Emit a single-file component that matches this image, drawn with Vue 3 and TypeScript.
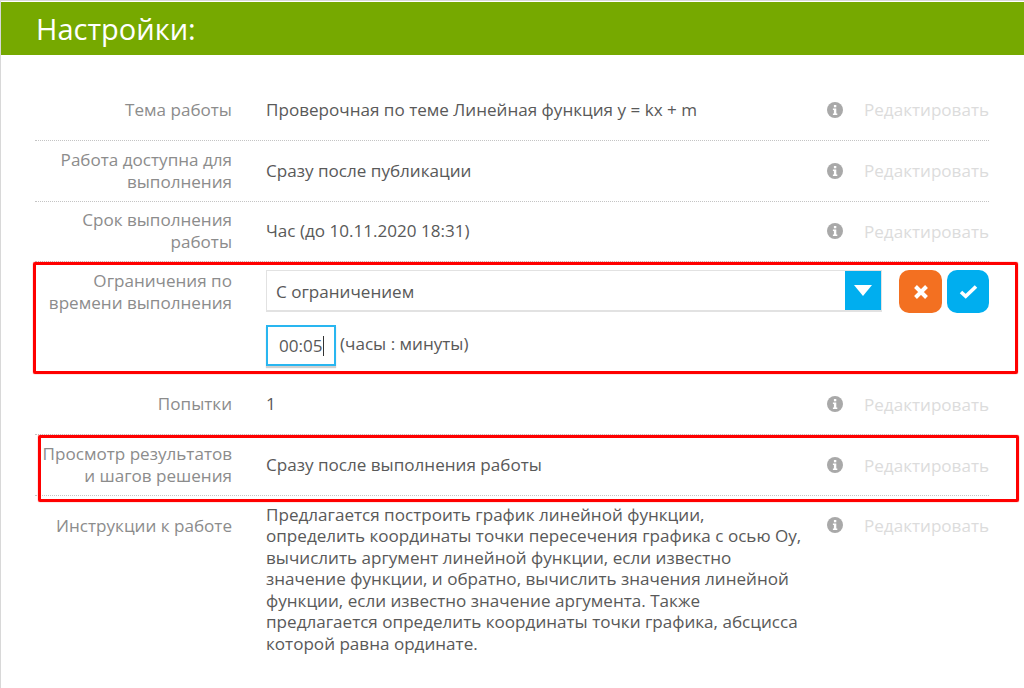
<script setup lang="ts">
interface Row { label: string[]; value: string }
const before: Row[] = [
  { label: ['Тема работы'], value: 'Проверочная по теме Линейная функция y = kx + m' },
  { label: ['Работа доступна для', 'выполнения'], value: 'Сразу после публикации' },
  { label: ['Срок выполнения', 'работы'], value: 'Час (до 10.11.2020 18:31)' },
]
const after: Row[] = [
  { label: ['Попытки'], value: '1' },
  { label: ['Просмотр результатов', 'и шагов решения'], value: 'Сразу после выполнения работы' },
]
const instruction = [
  'Предлагается построить график линейной функции,',
  'определить координаты точки пересечения графика с осью Оу,',
  'вычислить аргумент линейной функции, если известно',
  'значение функции, и обратно, вычислить значения линейной',
  'функции, если известно значение аргумента. Также',
  'предлагается определить координаты точки графика, абсцисса',
  'которой равна ординате.',
]
</script>

<template>
  <div class="page">
    <header class="head">Настройки:</header>
    <section class="list">
      <div v-for="r in before" :key="r.value" class="row">
        <div class="label"><div v-for="l in r.label" :key="l">{{ l }}</div></div>
        <div class="value">{{ r.value }}</div>
        <div class="actions">
          <svg class="info" viewBox="0 0 16 16"><circle cx="8" cy="8" r="8" fill="#a9a9a9" /><rect x="6.9" y="3" width="2.4" height="2.3" fill="#fff" /><path d="M5.9 6.6h3.4v5h1v1.3H5.9v-1.3h1v-3.7h-1z" fill="#fff" /></svg>
          <span class="edit">Редактировать</span>
        </div>
      </div>

      <div class="row editing">
        <div class="label"><div>Ограничения по</div><div>времени выполнения</div></div>
        <div class="editor">
          <div class="top">
            <div class="select">
              <span class="sel-text">С ограничением</span>
              <span class="arrow"><svg width="18" height="11" viewBox="0 0 18 11"><path d="M0 0h18L9 11z" fill="#fff" /></svg></span>
            </div>
            <div class="btns">
              <button class="btn orange"><svg width="16" height="16" viewBox="0 0 16 16"><path d="M2.5 2.5l11 11M13.5 2.5l-11 11" stroke="#fff" stroke-width="4" /></svg></button>
              <button class="btn blue"><svg width="19" height="15" viewBox="0 0 19 15"><path d="M2 8l4.7 4.3L17 2.5" stroke="#fff" stroke-width="3.6" fill="none" /></svg></button>
            </div>
          </div>
          <div class="time">
            <div class="input">00:05<span class="caret"></span></div>
            <span class="hint">(часы : минуты)</span>
          </div>
        </div>
      </div>

      <div v-for="r in after" :key="r.value" class="row">
        <div class="label"><div v-for="l in r.label" :key="l">{{ l }}</div></div>
        <div class="value">{{ r.value }}</div>
        <div class="actions">
          <svg class="info" viewBox="0 0 16 16"><circle cx="8" cy="8" r="8" fill="#a9a9a9" /><rect x="6.9" y="3" width="2.4" height="2.3" fill="#fff" /><path d="M5.9 6.6h3.4v5h1v1.3H5.9v-1.3h1v-3.7h-1z" fill="#fff" /></svg>
          <span class="edit">Редактировать</span>
        </div>
      </div>

      <div class="row last">
        <div class="label">Инструкции к работе</div>
        <div class="value text"><div v-for="l in instruction" :key="l">{{ l }}</div></div>
        <div class="actions">
          <svg class="info" viewBox="0 0 16 16"><circle cx="8" cy="8" r="8" fill="#a9a9a9" /><rect x="6.9" y="3" width="2.4" height="2.3" fill="#fff" /><path d="M5.9 6.6h3.4v5h1v1.3H5.9v-1.3h1v-3.7h-1z" fill="#fff" /></svg>
          <span class="edit">Редактировать</span>
        </div>
      </div>
    </section>
    <div class="mark mark-a"></div>
    <div class="mark mark-b"></div>
  </div>
</template>

<style scoped>
.page {
  position: relative;
  width: 1024px;
  height: 688px;
  overflow: hidden;
  box-sizing: border-box;
  background: #fff;
  border-left: 1px solid #d8d8d8;
  border-top: 1px solid #d8d8d8;
  font-family: "Open Sans", sans-serif;
  font-size: 17.08px;
  color: #595959;
}
.head {
  height: 53px;
  margin-top: 1px;
  padding-left: 35px;
  background: #76a900;
  color: #fff;
  font-size: 29px;
  line-height: 53px;
}
.list {
  padding: 25px 34px 0;
}
.row {
  display: flex;
  align-items: center;
  width: 954px;
  height: 60.8px;
  box-sizing: border-box;
  border-bottom: 1px dotted #c4c4c4;
}
.row.editing {
  height: 112px;
  align-items: flex-start;
  padding-top: 8px;
  border-bottom: none;
}
.row.last {
  height: auto;
  align-items: flex-start;
  border-bottom: none;
  padding-top: 8px;
}
.label {
  width: 197px;
  flex: none;
  margin-right: 34px;
  text-align: right;
  color: #8c8c8c;
  line-height: 22px;
}
.last .label {
  margin-top: 11px;
}
.value {
  flex: 1;
  min-width: 0;
  line-height: 22px;
}
.value.text {
  line-height: 21.45px;
  white-space: nowrap;
}
.actions {
  display: flex;
  align-items: center;
  flex: none;
  width: 162px;
}
.last .actions {
  margin-top: 10px;
}
.info {
  width: 16px;
  height: 16px;
  flex: none;
  margin-right: 21px;
}
.edit {
  color: #dcdcdc;
  white-space: nowrap;
}
.editor {
  flex: 1;
  min-width: 0;
}
.top {
  display: flex;
  align-items: flex-start;
}
.select {
  display: flex;
  width: 617px;
  height: 42px;
  box-sizing: border-box;
  border: 1px solid #e2e2e2;
  border-width: 1px 1px 2px 1px;
}
.sel-text {
  flex: 1;
  padding-left: 9px;
  line-height: 41px;
}
.arrow {
  display: flex;
  align-items: center;
  justify-content: center;
  width: 36px;
  background: #00aeef;
}
.btns {
  display: flex;
  gap: 5px;
  margin-left: 17px;
}
.btn {
  display: flex;
  align-items: center;
  justify-content: center;
  width: 43px;
  height: 43px;
  padding: 0;
  border: none;
  border-radius: 10px;
}
.btn.blue {
  width: 42px;
}
.orange {
  background: #f37021;
}
.blue {
  background: #00aeef;
}
.time {
  display: flex;
  align-items: center;
  margin-top: 12px;
}
.input {
  display: flex;
  align-items: center;
  width: 70px;
  height: 41px;
  box-sizing: border-box;
  border: 2px solid #29b6f0;
  box-shadow: 0 2px 1px #d0d0d0;
  padding-left: 11px;
  color: #595959;
}
.caret {
  width: 1px;
  height: 20px;
  background: #333;
}
.hint {
  margin-left: 4px;
  margin-top: -4px;
}
.mark {
  position: absolute;
  box-sizing: border-box;
  border: 3px solid #f00;
  border-radius: 2px;
  box-shadow: 0 0 1px #f00;
  pointer-events: none;
}
.mark-a {
  left: 32px;
  top: 261px;
  width: 985px;
  height: 112px;
}
.mark-b {
  left: 37px;
  top: 434px;
  width: 981px;
  height: 67px;
}
</style>
